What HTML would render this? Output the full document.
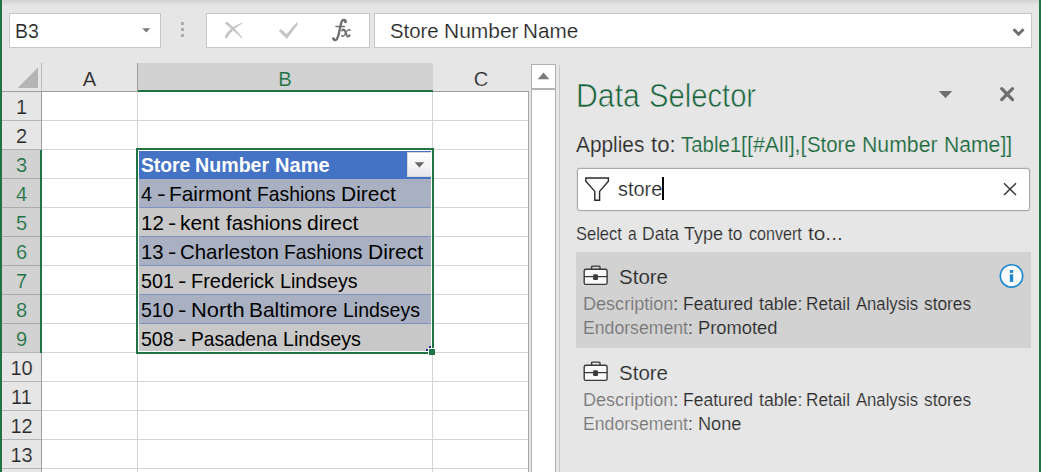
<!DOCTYPE html>
<html><head><meta charset="utf-8"><title>Excel Data Selector</title><style>
html,body{margin:0;padding:0}
body{width:1041px;height:472px;overflow:hidden;background:#e6e6e6;position:relative;font-family:"Liberation Sans",sans-serif}
body>div,body>svg,body>span{position:absolute;display:block}
.box{background:#fff;box-sizing:border-box;border:1px solid #c6c6c6}
.t{white-space:nowrap;line-height:1;transform-origin:0 0}
</style></head><body>
<div style="left:0;top:0;width:1041px;height:6px;background:linear-gradient(#d3d3d3,#e6e6e6)"></div>
<div class="box" style="left:9px;top:13px;width:152px;height:35px"></div>
<div class="box" style="left:206px;top:13px;width:164px;height:35px"></div>
<div class="box" style="left:374px;top:13px;width:658px;height:35px"></div>
<svg style="left:142.3px;top:28px" width="9" height="5" viewBox="0 0 9 5"><path d="M0.3,0.3 H8.2 L4.25,4.6 Z" fill="#777"/></svg>
<div style="left:181px;top:22px;width:3px;height:3px;background:#adadad"></div>
<div style="left:181px;top:28px;width:3px;height:3px;background:#adadad"></div>
<div style="left:181px;top:34px;width:3px;height:3px;background:#adadad"></div>
<svg style="left:216px;top:14px" width="92" height="32" viewBox="216 14 92 32"><path d="M225.0,23.5 Q225.5,21.3 227.5,22.0 C232.2,25.6 238,32 242.5,37.6 L241.7,38.3 C236,33 230,27.6 225.0,23.5 Z" fill="#c6c6c6"/><path d="M224.8,36.3 C227.5,30.8 234,25.4 242.0,22.7 L242.5,23.6 C236.2,27 230.6,32 226.9,38.3 Q225.3,39.2 224.8,36.3 Z" fill="#c6c6c6"/><path d="M278.9,31.0 L281.0,28.9 L286.5,34.0 L297.1,22.1 L297.8,24.6 L286.8,39.1 Z" fill="#c6c6c6"/></svg>
<svg style="left:326px;top:14px" width="30" height="32" viewBox="326 14 30 32"><g fill="none" stroke="#6e6e6e" stroke-linecap="round"><path d="M345.7,21.9 C345.6,19.3 342.6,18.9 341.5,22.2 C340.5,25.4 339.2,32.6 337.9,36.8 C336.8,40.6 334.2,41.0 333.3,38.7" stroke-width="2.3"/><path d="M336.0,26.4 H344.4" stroke-width="1.5"/><path d="M342.2,30.5 C343.5,28.9 344.7,29.5 345.3,31.5 L346.5,35.0 C347.1,36.9 348.3,37.0 349.6,35.3" stroke-width="2.1"/><path d="M349.7,30.0 C348.5,28.9 347.4,30.0 345.8,32.8 C344.4,35.3 343.4,37.0 342.0,36.1" stroke-width="1.2"/></g><circle cx="345.4" cy="21.9" r="1.25" fill="#6e6e6e"/><circle cx="333.5" cy="38.5" r="1.25" fill="#6e6e6e"/><circle cx="349.7" cy="30.1" r="0.9" fill="#6e6e6e"/><circle cx="342.1" cy="36.0" r="0.9" fill="#6e6e6e"/></svg>
<svg style="left:1012px;top:27px" width="13" height="10" viewBox="0 0 13 10"><path d="M1.6,2.2 L6.6,7.2 L11.6,2.2" stroke="#6e6e6e" stroke-width="2.9" fill="none"/></svg>
<div style="left:42px;top:92px;width:486px;height:380px;background:#fff"></div>
<div style="left:42px;top:120px;width:486px;height:1px;background:#d4d4d4"></div>
<div style="left:2px;top:120px;width:39px;height:1px;background:#b4b4b4"></div>
<div style="left:42px;top:149px;width:486px;height:1px;background:#d4d4d4"></div>
<div style="left:2px;top:149px;width:39px;height:1px;background:#b4b4b4"></div>
<div style="left:42px;top:178px;width:486px;height:1px;background:#d4d4d4"></div>
<div style="left:2px;top:178px;width:39px;height:1px;background:#b4b4b4"></div>
<div style="left:42px;top:207px;width:486px;height:1px;background:#d4d4d4"></div>
<div style="left:2px;top:207px;width:39px;height:1px;background:#b4b4b4"></div>
<div style="left:42px;top:236px;width:486px;height:1px;background:#d4d4d4"></div>
<div style="left:2px;top:236px;width:39px;height:1px;background:#b4b4b4"></div>
<div style="left:42px;top:265px;width:486px;height:1px;background:#d4d4d4"></div>
<div style="left:2px;top:265px;width:39px;height:1px;background:#b4b4b4"></div>
<div style="left:42px;top:294px;width:486px;height:1px;background:#d4d4d4"></div>
<div style="left:2px;top:294px;width:39px;height:1px;background:#b4b4b4"></div>
<div style="left:42px;top:323px;width:486px;height:1px;background:#d4d4d4"></div>
<div style="left:2px;top:323px;width:39px;height:1px;background:#b4b4b4"></div>
<div style="left:42px;top:352px;width:486px;height:1px;background:#d4d4d4"></div>
<div style="left:2px;top:352px;width:39px;height:1px;background:#b4b4b4"></div>
<div style="left:42px;top:381px;width:486px;height:1px;background:#d4d4d4"></div>
<div style="left:2px;top:381px;width:39px;height:1px;background:#b4b4b4"></div>
<div style="left:42px;top:410px;width:486px;height:1px;background:#d4d4d4"></div>
<div style="left:2px;top:410px;width:39px;height:1px;background:#b4b4b4"></div>
<div style="left:42px;top:439px;width:486px;height:1px;background:#d4d4d4"></div>
<div style="left:2px;top:439px;width:39px;height:1px;background:#b4b4b4"></div>
<div style="left:42px;top:468px;width:486px;height:1px;background:#d4d4d4"></div>
<div style="left:2px;top:468px;width:39px;height:1px;background:#b4b4b4"></div>
<div style="left:137px;top:92px;width:1px;height:380px;background:#d4d4d4"></div>
<div style="left:432px;top:92px;width:1px;height:380px;background:#d4d4d4"></div>
<div style="left:41px;top:63px;width:1px;height:28px;background:#bcbcbc"></div>
<div style="left:41px;top:91px;width:1px;height:381px;background:#9e9e9e"></div>
<div style="left:2px;top:91px;width:527px;height:1px;background:#9e9e9e"></div>
<div style="left:528px;top:92px;width:1px;height:380px;background:#a6a6a6"></div>
<svg style="left:17px;top:67px" width="22" height="22" viewBox="0 0 22 22"><path d="M21,0.6 V21 H0.6 Z" fill="#b4b4b4"/></svg>
<div style="left:138px;top:63px;width:295px;height:27px;background:#d2d2d2"></div>
<div style="left:137px;top:63px;width:1px;height:28px;background:#9e9e9e"></div>
<div style="left:138px;top:90px;width:295px;height:2px;background:#217346"></div>
<div style="left:2px;top:150px;width:38px;height:202px;background:#d2d2d2"></div>
<div style="left:2px;top:178px;width:38px;height:1px;background:#ababab"></div>
<div style="left:2px;top:207px;width:38px;height:1px;background:#ababab"></div>
<div style="left:2px;top:236px;width:38px;height:1px;background:#ababab"></div>
<div style="left:2px;top:265px;width:38px;height:1px;background:#ababab"></div>
<div style="left:2px;top:294px;width:38px;height:1px;background:#ababab"></div>
<div style="left:2px;top:323px;width:38px;height:1px;background:#ababab"></div>
<div style="left:40px;top:150px;width:2px;height:203px;background:#217346"></div>
<div style="left:139px;top:151px;width:292px;height:28px;background:#4472c4"></div>
<div style="left:139px;top:179px;width:292px;height:28px;background:#a9b0c1"></div>
<div style="left:139px;top:207px;width:292px;height:1px;background:#7f93c0"></div>
<div style="left:139px;top:208px;width:292px;height:28px;background:#c8c8c8"></div>
<div style="left:139px;top:236px;width:292px;height:1px;background:#7f93c0"></div>
<div style="left:139px;top:237px;width:292px;height:28px;background:#a9b0c1"></div>
<div style="left:139px;top:265px;width:292px;height:1px;background:#7f93c0"></div>
<div style="left:139px;top:266px;width:292px;height:28px;background:#c8c8c8"></div>
<div style="left:139px;top:294px;width:292px;height:1px;background:#7f93c0"></div>
<div style="left:139px;top:295px;width:292px;height:28px;background:#a9b0c1"></div>
<div style="left:139px;top:323px;width:292px;height:1px;background:#7f93c0"></div>
<div style="left:139px;top:324px;width:292px;height:27px;background:#c8c8c8"></div>
<div style="left:136px;top:148px;width:298px;height:206px;box-sizing:border-box;border:2px solid #217346"></div>
<div style="left:138px;top:150px;width:294px;height:202px;box-sizing:border-box;border:1px solid #fff"></div>
<div style="left:428px;top:348px;width:7px;height:7px;background:#fff"></div>
<div style="left:429px;top:349px;width:6px;height:6px;background:#217346"></div>
<div style="left:429px;top:346px;width:2px;height:2px;background:#1f2a8c"></div>
<div style="left:426px;top:349px;width:2px;height:2px;background:#1f2a8c"></div>
<div style="left:407px;top:152px;width:24px;height:25px;background:linear-gradient(#ffffff,#f3f3f3 60%,#e4e6ea);box-sizing:border-box;border:1px solid #d8d8d8;border-right:0"></div>
<svg style="left:414px;top:162px" width="11" height="6" viewBox="0 0 11 6"><path d="M0.6,0.3 H10.2 L5.4,5.5 Z" fill="#666"/></svg>
<div style="left:531px;top:64px;width:25px;height:408px;background:#fff;box-sizing:border-box;border:1px solid #b2b2b2;border-bottom:0"></div>
<div style="left:531px;top:88px;width:25px;height:2px;background:#b2b2b2"></div>
<svg style="left:537px;top:72px" width="13" height="8" viewBox="0 0 13 8"><path d="M6.5,0.6 L12.3,7.2 H0.7 Z" fill="#7a7a7a"/></svg>
<div style="left:559px;top:65px;width:1px;height:407px;background:#c8c8c8"></div>
<svg style="left:938px;top:90px" width="15" height="9" viewBox="0 0 15 9"><path d="M0.8,0.9 H14.2 L7.5,8.2 Z" fill="#707070"/></svg>
<svg style="left:998px;top:85px" width="18" height="18" viewBox="0 0 18 18"><path d="M3.7,3.6 L14.5,14.6 M14.5,3.6 L3.7,14.6" stroke="#6e6e6e" stroke-width="3.2" fill="none" stroke-linecap="round"/></svg>
<div style="left:577px;top:168px;width:453px;height:43px;background:#fff;box-sizing:border-box;border:1px solid #a8a8a8;border-radius:3px;box-shadow:0 0 0 0.5px #cfcfcf"></div>
<svg style="left:583px;top:175px" width="28" height="28" viewBox="0 0 28 28"><path d="M2.8,3.0 H25.4 V6.2 L16.6,16.4 V25.2 H11.8 V16.4 L2.8,6.2 Z" fill="#fafafa" stroke="#2b2b2b" stroke-width="1.4" stroke-linejoin="miter"/></svg>
<div style="left:662px;top:177px;width:2px;height:23px;background:#000"></div>
<svg style="left:1002px;top:181px" width="16" height="16" viewBox="0 0 16 16"><path d="M2,2.2 L14,14 M14,2.2 L2,14" stroke="#333" stroke-width="1.4" fill="none"/></svg>
<div style="left:576px;top:252px;width:455px;height:96px;background:#d2d2d2"></div>
<svg style="left:582px;top:263px" width="28" height="24" viewBox="0 0 28 24"><path d="M9.6,6.2 V4.1 Q9.6,3.1 10.6,3.1 H17 Q18,3.1 18,4.1 V6.2" fill="none" stroke="#3b3b3b" stroke-width="1.4"/><rect x="2.2" y="6.3" width="22.9" height="15.1" rx="1.6" fill="#fafafa" stroke="#3b3b3b" stroke-width="1.4"/><path d="M2.2,13.6 H25.1" stroke="#3b3b3b" stroke-width="1.3"/><rect x="11.1" y="11.3" width="4.9" height="5.6" rx="1.2" fill="#3b3b3b"/></svg>
<svg style="left:582px;top:359px" width="28" height="24" viewBox="0 0 28 24"><path d="M9.6,6.2 V4.1 Q9.6,3.1 10.6,3.1 H17 Q18,3.1 18,4.1 V6.2" fill="none" stroke="#3b3b3b" stroke-width="1.4"/><rect x="2.2" y="6.3" width="22.9" height="15.1" rx="1.6" fill="#fafafa" stroke="#3b3b3b" stroke-width="1.4"/><path d="M2.2,13.6 H25.1" stroke="#3b3b3b" stroke-width="1.3"/><rect x="11.1" y="11.3" width="4.9" height="5.6" rx="1.2" fill="#3b3b3b"/></svg>
<svg style="left:998px;top:262px" width="28" height="28" viewBox="0 0 28 28"><circle cx="13.5" cy="13.9" r="11.2" fill="#fafafa" stroke="#1e88d0" stroke-width="1.6"/><rect x="11.8" y="8" width="3.4" height="2.9" fill="#1e88d0"/><rect x="11.8" y="12.3" width="3.4" height="7.6" fill="#1e88d0"/></svg>
<div style="left:0;top:0;width:2px;height:472px;background:#217346"></div>
<div style="left:1039px;top:0;width:2px;height:472px;background:#217346"></div>
<span class="t" style="left:15.33px;top:21px;font-size:20.4px;color:#262626;transform:scaleX(0.9528);-webkit-text-stroke:0.18px #fff;">B3</span>
<span class="t" style="left:390.20px;top:21px;font-size:20.4px;color:#262626;transform:scaleX(0.9957);-webkit-text-stroke:0.18px #fff;">Store</span>
<span class="t" style="left:443.70px;top:21px;font-size:20.4px;color:#262626;transform:scaleX(1.0284);-webkit-text-stroke:0.18px #fff;">Number</span>
<span class="t" style="left:523.22px;top:21px;font-size:20.4px;color:#262626;transform:scaleX(1.0145);-webkit-text-stroke:0.18px #fff;">Name</span>
<span class="t" style="left:89.50px;top:69px;font-size:20.2px;color:#262626;transform:translateX(-50%);-webkit-text-stroke:0.18px #e6e6e6;">A</span>
<span class="t" style="left:285.00px;top:69px;font-size:20.2px;color:#217346;transform:translateX(-50%);-webkit-text-stroke:0.18px #d2d2d2;">B</span>
<span class="t" style="left:481.00px;top:69px;font-size:20.2px;color:#262626;transform:translateX(-50%);-webkit-text-stroke:0.18px #e6e6e6;">C</span>
<span class="t" style="left:21.50px;top:97px;font-size:20.0px;color:#262626;transform:translateX(-50%);-webkit-text-stroke:0.18px #e6e6e6;">1</span>
<span class="t" style="left:21.50px;top:126px;font-size:20.0px;color:#262626;transform:translateX(-50%);-webkit-text-stroke:0.18px #e6e6e6;">2</span>
<span class="t" style="left:21.50px;top:155px;font-size:20.0px;color:#217346;transform:translateX(-50%);-webkit-text-stroke:0.18px #d2d2d2;">3</span>
<span class="t" style="left:21.50px;top:184px;font-size:20.0px;color:#217346;transform:translateX(-50%);-webkit-text-stroke:0.18px #d2d2d2;">4</span>
<span class="t" style="left:21.50px;top:213px;font-size:20.0px;color:#217346;transform:translateX(-50%);-webkit-text-stroke:0.18px #d2d2d2;">5</span>
<span class="t" style="left:21.50px;top:242px;font-size:20.0px;color:#217346;transform:translateX(-50%);-webkit-text-stroke:0.18px #d2d2d2;">6</span>
<span class="t" style="left:21.50px;top:271px;font-size:20.0px;color:#217346;transform:translateX(-50%);-webkit-text-stroke:0.18px #d2d2d2;">7</span>
<span class="t" style="left:21.50px;top:300px;font-size:20.0px;color:#217346;transform:translateX(-50%);-webkit-text-stroke:0.18px #d2d2d2;">8</span>
<span class="t" style="left:21.50px;top:329px;font-size:20.0px;color:#217346;transform:translateX(-50%);-webkit-text-stroke:0.18px #d2d2d2;">9</span>
<span class="t" style="left:21.50px;top:358px;font-size:20.0px;color:#262626;transform:translateX(-50%);-webkit-text-stroke:0.18px #e6e6e6;">10</span>
<span class="t" style="left:21.50px;top:387px;font-size:20.0px;color:#262626;transform:translateX(-50%);-webkit-text-stroke:0.18px #e6e6e6;">11</span>
<span class="t" style="left:21.50px;top:416px;font-size:20.0px;color:#262626;transform:translateX(-50%);-webkit-text-stroke:0.18px #e6e6e6;">12</span>
<span class="t" style="left:21.50px;top:445px;font-size:20.0px;color:#262626;transform:translateX(-50%);-webkit-text-stroke:0.18px #e6e6e6;">13</span>
<span class="t" style="left:140.71px;top:156px;font-size:19.8px;color:#fff;transform:scaleX(0.9717);font-weight:bold;">Store</span>
<span class="t" style="left:194.66px;top:156px;font-size:19.8px;color:#fff;transform:scaleX(0.9925);font-weight:bold;">Number</span>
<span class="t" style="left:274.53px;top:156px;font-size:19.8px;color:#fff;transform:scaleX(1.0135);font-weight:bold;">Name</span>
<span class="t" style="left:141.30px;top:185px;font-size:19.8px;color:#000;transform:scaleX(1.0100);">4</span>
<span class="t" style="left:156.61px;top:185px;font-size:19.8px;color:#000;transform:scaleX(1.3200);">-</span>
<span class="t" style="left:169.02px;top:185px;font-size:19.8px;color:#000;transform:scaleX(1.0549);">Fairmont</span>
<span class="t" style="left:257.04px;top:185px;font-size:19.8px;color:#000;transform:scaleX(0.9764);">Fashions</span>
<span class="t" style="left:341.31px;top:185px;font-size:19.8px;color:#000;transform:scaleX(1.0620);">Direct</span>
<span class="t" style="left:140.75px;top:214px;font-size:19.8px;color:#000;transform:scaleX(1.0359);">12</span>
<span class="t" style="left:167.66px;top:214px;font-size:19.8px;color:#000;transform:scaleX(1.2600);">-</span>
<span class="t" style="left:180.18px;top:214px;font-size:19.8px;color:#000;transform:scaleX(1.0583);">kent</span>
<span class="t" style="left:225.64px;top:214px;font-size:19.8px;color:#000;transform:scaleX(1.0296);">fashions</span>
<span class="t" style="left:307.20px;top:214px;font-size:19.8px;color:#000;transform:scaleX(1.0632);">direct</span>
<span class="t" style="left:140.77px;top:243px;font-size:19.8px;color:#000;transform:scaleX(1.0228);">13</span>
<span class="t" style="left:167.66px;top:243px;font-size:19.8px;color:#000;transform:scaleX(1.2600);">-</span>
<span class="t" style="left:179.67px;top:243px;font-size:19.8px;color:#000;transform:scaleX(1.0321);">Charleston</span>
<span class="t" style="left:283.54px;top:243px;font-size:19.8px;color:#000;transform:scaleX(0.9764);">Fashions</span>
<span class="t" style="left:367.80px;top:243px;font-size:19.8px;color:#000;transform:scaleX(1.0660);">Direct</span>
<span class="t" style="left:141.05px;top:272px;font-size:19.8px;color:#000;transform:scaleX(0.9952);">501</span>
<span class="t" style="left:178.24px;top:272px;font-size:19.8px;color:#000;transform:scaleX(1.2800);">-</span>
<span class="t" style="left:190.69px;top:272px;font-size:19.8px;color:#000;transform:scaleX(1.0074);">Frederick</span>
<span class="t" style="left:279.51px;top:272px;font-size:19.8px;color:#000;transform:scaleX(0.9934);">Lindseys</span>
<span class="t" style="left:141.06px;top:301px;font-size:19.8px;color:#000;transform:scaleX(0.9873);">510</span>
<span class="t" style="left:178.24px;top:301px;font-size:19.8px;color:#000;transform:scaleX(1.2800);">-</span>
<span class="t" style="left:190.54px;top:301px;font-size:19.8px;color:#000;transform:scaleX(1.1077);">North</span>
<span class="t" style="left:248.81px;top:301px;font-size:19.8px;color:#000;transform:scaleX(1.0572);">Baltimore</span>
<span class="t" style="left:342.62px;top:301px;font-size:19.8px;color:#000;transform:scaleX(0.9855);">Lindseys</span>
<span class="t" style="left:141.06px;top:330px;font-size:19.8px;color:#000;transform:scaleX(0.9873);">508</span>
<span class="t" style="left:178.24px;top:330px;font-size:19.8px;color:#000;transform:scaleX(1.2800);">-</span>
<span class="t" style="left:190.75px;top:330px;font-size:19.8px;color:#000;transform:scaleX(0.9687);">Pasadena</span>
<span class="t" style="left:282.90px;top:330px;font-size:19.8px;color:#000;transform:scaleX(0.9974);">Lindseys</span>
<span class="t" style="left:575.52px;top:79px;font-size:33.6px;color:#17633a;transform:scaleX(0.9011);-webkit-text-stroke:0.65px #e6e6e6;">Data</span>
<span class="t" style="left:649.30px;top:79px;font-size:33.6px;color:#17633a;transform:scaleX(0.8693);-webkit-text-stroke:0.65px #e6e6e6;">Selector</span>
<span class="t" style="left:576.20px;top:135px;font-size:21.3px;color:#2b2b2b;transform:scaleX(0.9783);-webkit-text-stroke:0.18px #e6e6e6;">Applies</span>
<span class="t" style="left:650.94px;top:135px;font-size:21.3px;color:#2b2b2b;transform:scaleX(1.0419);-webkit-text-stroke:0.18px #e6e6e6;">to:</span>
<span class="t" style="left:680.62px;top:135px;font-size:21.3px;color:#1c6a3e;transform:scaleX(0.9584);-webkit-text-stroke:0.18px #e6e6e6;">Table1</span>
<span class="t" style="left:740.79px;top:135px;font-size:21.3px;color:#1c6a3e;transform:scaleX(1.0063);-webkit-text-stroke:0.18px #e6e6e6;">[[#All],[</span>
<span class="t" style="left:807.04px;top:135px;font-size:21.3px;color:#1c6a3e;transform:scaleX(0.9571);-webkit-text-stroke:0.18px #e6e6e6;">Store</span>
<span class="t" style="left:861.95px;top:135px;font-size:21.3px;color:#1c6a3e;transform:scaleX(0.9980);-webkit-text-stroke:0.18px #e6e6e6;">Number</span>
<span class="t" style="left:943.56px;top:135px;font-size:21.3px;color:#1c6a3e;transform:scaleX(0.9924);-webkit-text-stroke:0.18px #e6e6e6;">Name]]</span>
<span class="t" style="left:618.00px;top:180px;font-size:19.9px;color:#2b2b2b;transform:scaleX(1.0000);-webkit-text-stroke:0.18px #fff;">store</span>
<span class="t" style="left:575.83px;top:224px;font-size:19.0px;color:#2b2b2b;transform:scaleX(0.8676);-webkit-text-stroke:0.18px #e6e6e6;">Select</span>
<span class="t" style="left:628.38px;top:224px;font-size:19.0px;color:#2b2b2b;transform:scaleX(0.8205);-webkit-text-stroke:0.18px #e6e6e6;">a</span>
<span class="t" style="left:641.82px;top:224px;font-size:19.0px;color:#2b2b2b;transform:scaleX(0.9213);-webkit-text-stroke:0.18px #e6e6e6;">Data</span>
<span class="t" style="left:683.83px;top:224px;font-size:19.0px;color:#2b2b2b;transform:scaleX(0.9484);-webkit-text-stroke:0.18px #e6e6e6;">Type</span>
<span class="t" style="left:728.47px;top:224px;font-size:19.0px;color:#2b2b2b;transform:scaleX(0.9085);-webkit-text-stroke:0.18px #e6e6e6;">to</span>
<span class="t" style="left:749.06px;top:224px;font-size:19.0px;color:#2b2b2b;transform:scaleX(0.8472);-webkit-text-stroke:0.18px #e6e6e6;">convert</span>
<span class="t" style="left:807.73px;top:224px;font-size:19.0px;color:#2b2b2b;transform:scaleX(1.0958);-webkit-text-stroke:0.18px #e6e6e6;">to...</span>
<span class="t" style="left:619.21px;top:267px;font-size:20.8px;color:#2b2b2b;transform:scaleX(0.9864);-webkit-text-stroke:0.18px #d2d2d2;">Store</span>
<span class="t" style="left:583.15px;top:295px;font-size:18.7px;color:#2b2b2b;transform:scaleX(0.9665);-webkit-text-stroke:0.18px #d2d2d2;"><span style="color:#767676">Description</span>:</span>
<span class="t" style="left:682.60px;top:295px;font-size:18.7px;color:#2b2b2b;transform:scaleX(0.9356);-webkit-text-stroke:0.18px #d2d2d2;">Featured</span>
<span class="t" style="left:758.66px;top:295px;font-size:18.7px;color:#2b2b2b;transform:scaleX(0.9486);-webkit-text-stroke:0.18px #d2d2d2;">table:</span>
<span class="t" style="left:806.22px;top:295px;font-size:18.7px;color:#2b2b2b;transform:scaleX(0.9200);-webkit-text-stroke:0.18px #d2d2d2;">Retail</span>
<span class="t" style="left:856.00px;top:295px;font-size:18.7px;color:#2b2b2b;transform:scaleX(0.8913);-webkit-text-stroke:0.18px #d2d2d2;">Analysis</span>
<span class="t" style="left:923.94px;top:295px;font-size:18.7px;color:#2b2b2b;transform:scaleX(0.9266);-webkit-text-stroke:0.18px #d2d2d2;">stores</span>
<span class="t" style="left:583.18px;top:319px;font-size:18.7px;color:#2b2b2b;transform:scaleX(0.9448);-webkit-text-stroke:0.18px #d2d2d2;"><span style="color:#767676">Endorsement</span>:</span>
<span class="t" style="left:697.53px;top:319px;font-size:18.7px;color:#2b2b2b;transform:scaleX(0.9809);-webkit-text-stroke:0.18px #d2d2d2;">Promoted</span>
<span class="t" style="left:619.21px;top:363px;font-size:20.8px;color:#2b2b2b;transform:scaleX(0.9864);-webkit-text-stroke:0.18px #e6e6e6;">Store</span>
<span class="t" style="left:583.15px;top:391px;font-size:18.7px;color:#2b2b2b;transform:scaleX(0.9665);-webkit-text-stroke:0.18px #e6e6e6;"><span style="color:#767676">Description</span>:</span>
<span class="t" style="left:682.60px;top:391px;font-size:18.7px;color:#2b2b2b;transform:scaleX(0.9356);-webkit-text-stroke:0.18px #e6e6e6;">Featured</span>
<span class="t" style="left:758.66px;top:391px;font-size:18.7px;color:#2b2b2b;transform:scaleX(0.9486);-webkit-text-stroke:0.18px #e6e6e6;">table:</span>
<span class="t" style="left:806.22px;top:391px;font-size:18.7px;color:#2b2b2b;transform:scaleX(0.9200);-webkit-text-stroke:0.18px #e6e6e6;">Retail</span>
<span class="t" style="left:856.00px;top:391px;font-size:18.7px;color:#2b2b2b;transform:scaleX(0.8913);-webkit-text-stroke:0.18px #e6e6e6;">Analysis</span>
<span class="t" style="left:923.94px;top:391px;font-size:18.7px;color:#2b2b2b;transform:scaleX(0.9266);-webkit-text-stroke:0.18px #e6e6e6;">stores</span>
<span class="t" style="left:583.18px;top:415px;font-size:18.7px;color:#2b2b2b;transform:scaleX(0.9448);-webkit-text-stroke:0.18px #e6e6e6;"><span style="color:#767676">Endorsement</span>:</span>
<span class="t" style="left:697.54px;top:415px;font-size:18.7px;color:#2b2b2b;transform:scaleX(0.9718);-webkit-text-stroke:0.18px #e6e6e6;">None</span>
</body></html>
